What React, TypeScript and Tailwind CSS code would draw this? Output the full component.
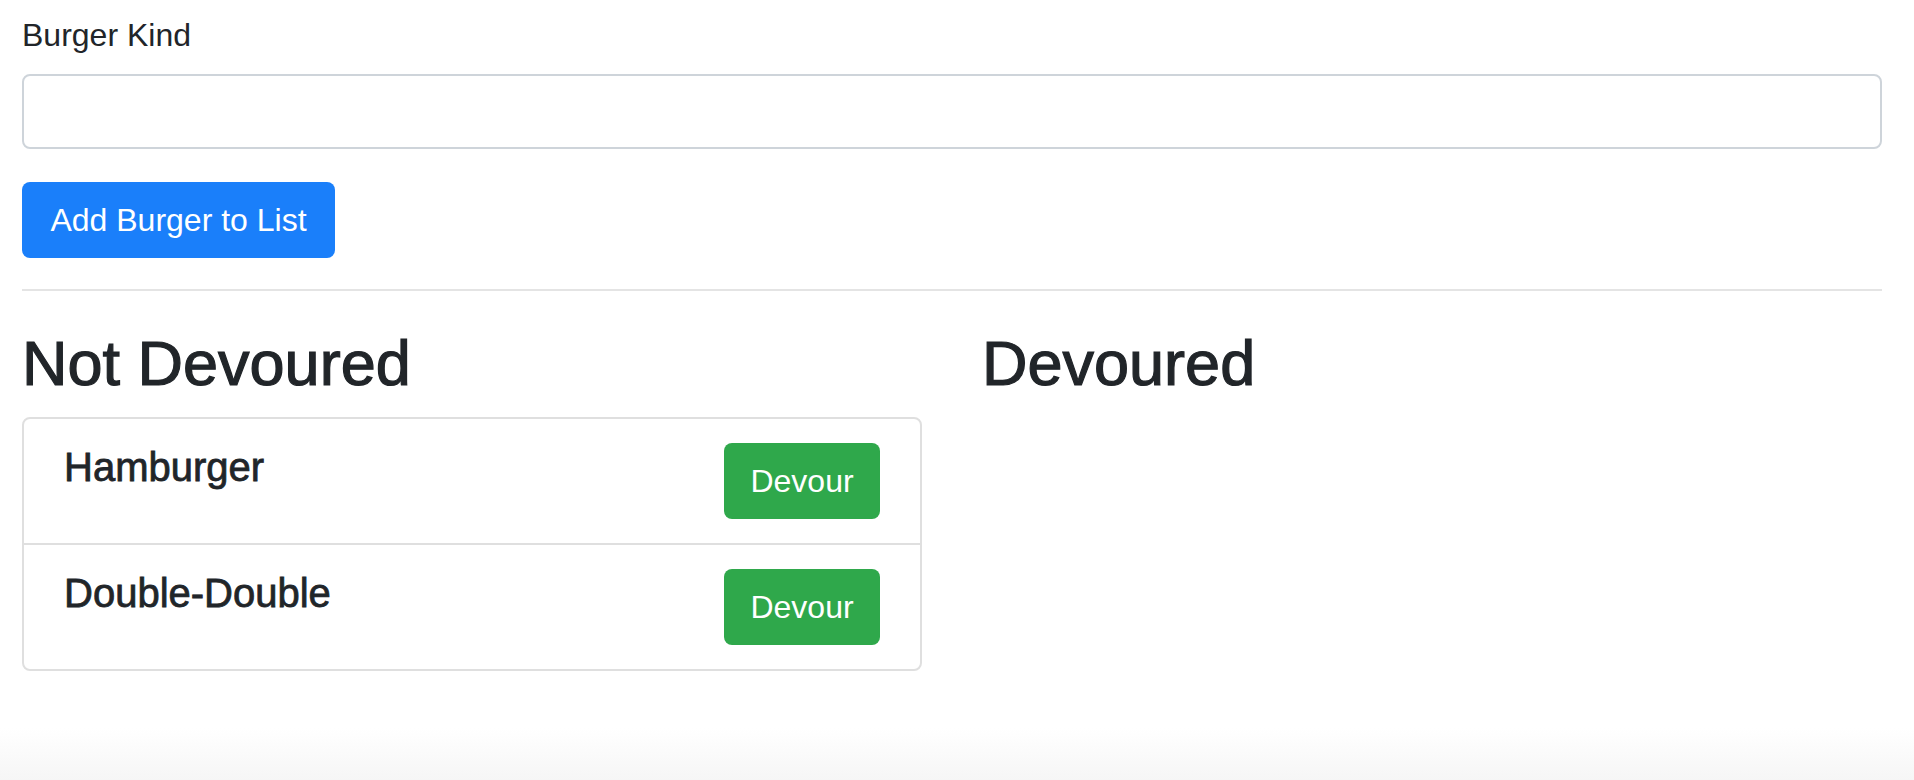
import { useState } from 'react';

// Burger list page: add form on top, two columns of burgers below.

interface Burger {
  id: number;
  name: string;
  devoured: boolean;
}

const initialBurgers: Burger[] = [
  { id: 1, name: 'Hamburger', devoured: false },
  { id: 2, name: 'Double-Double', devoured: false },
];

export default function App() {
  const [burgers, setBurgers] = useState<Burger[]>(initialBurgers);
  const [name, setName] = useState('');

  const notDevoured = burgers.filter(burger => !burger.devoured);
  const devoured = burgers.filter(burger => burger.devoured);

  const addBurger = () => {
    if (!name.trim()) return;
    setBurgers(current => [...current, { id: Date.now(), name: name.trim(), devoured: false }]);
    setName('');
  };

  const devour = (id: number) => {
    setBurgers(current => current.map(burger => (burger.id === id ? { ...burger, devoured: true } : burger)));
  };

  return (
    <div className="h-[780px] overflow-hidden bg-[linear-gradient(to_bottom,#ffffff_728px,#f6f6f6_780px)] px-[22px] pt-[11px] font-['Liberation_Sans',Arial,sans-serif] text-[#212529]">
      <div className="w-[1860px]">
        <label className="block text-[32px] leading-[48px]">Burger Kind</label>
        <input
          value={name}
          onChange={event => setName(event.target.value)}
          className="mt-[15px] block h-[75px] w-full rounded-[8px] border-2 border-[#ced4da] bg-white px-[24px] text-[32px] outline-none"
        />
        <button
          onClick={addBurger}
          className="mt-[33px] flex h-[76px] w-[313px] items-center justify-center rounded-[8px] bg-[#1a7ffa] text-[32px] text-white"
        >
          Add Burger to List
        </button>

        <hr className="mt-[31px] border-t-2 border-[#e4e4e4]" />

        <div className="mt-[34px] grid grid-cols-[900px_900px] gap-[60px]">
          <section>
            <h2 className="mb-[15px] text-[63px] font-medium leading-[77px] [-webkit-text-stroke:1.2px_#212529]">Not Devoured</h2>
            {notDevoured.length > 0 && (
              <ul className="rounded-[8px] border-2 border-[#dfdfdf]">
                {notDevoured.map((burger, index) => (
                  <li
                    key={burger.id}
                    className={`flex items-start justify-between px-[40px] py-[24px] ${index > 0 ? 'border-t-2 border-[#dfdfdf]' : ''}`}
                  >
                    <h5 className="text-[40px] font-medium leading-[48px] [-webkit-text-stroke:0.8px_#212529]">{burger.name}</h5>
                    <button
                      onClick={() => devour(burger.id)}
                      className="flex h-[76px] w-[156px] items-center justify-center rounded-[8px] bg-[#2fa84b] text-[32px] text-white"
                    >
                      Devour
                    </button>
                  </li>
                ))}
              </ul>
            )}
          </section>
          <section>
            <h2 className="mb-[15px] text-[63px] font-medium leading-[77px] [-webkit-text-stroke:1.2px_#212529]">Devoured</h2>
            {devoured.length > 0 && (
              <ul className="rounded-[8px] border-2 border-[#dfdfdf]">
                {devoured.map((burger, index) => (
                  <li
                    key={burger.id}
                    className={`px-[40px] py-[24px] ${index > 0 ? 'border-t-2 border-[#dfdfdf]' : ''}`}
                  >
                    <h5 className="text-[40px] font-medium leading-[48px] [-webkit-text-stroke:0.8px_#212529]">{burger.name}</h5>
                  </li>
                ))}
              </ul>
            )}
          </section>
        </div>
      </div>
    </div>
  );
}
